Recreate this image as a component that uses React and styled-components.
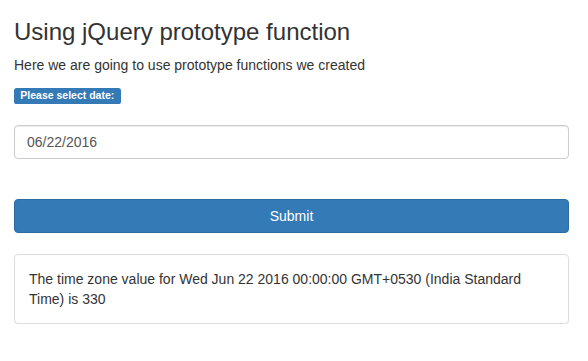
import React from 'react';
import styled, {createGlobalStyle} from 'styled-components';

const GlobalStyle = createGlobalStyle`
  html, body {
    margin: 0;
    padding: 0;
    background: #fff;
  }
  body {
    font-family: "Liberation Sans", Arial, Helvetica, sans-serif;
    font-size: 14px;
    line-height: 1.42857143;
    color: #333;
  }
  * {
    box-sizing: border-box;
  }
`

const Container = styled.div`
  padding: 0 19px 0 14px;
`

const Title = styled.h3`
  margin: 19px 0 10px;
  font-size: 24px;
  font-weight: 500;
  line-height: 1.1;
  color: #333;
`

const Lead = styled.p`
  margin: 0 0 10px;
`

const LabelRow = styled.div`
  margin-bottom: 20px;
  line-height: 18px;
  height: 20px;
`

const Badge = styled.span`
  display: inline-block;
  padding: .2em .6em .3em;
  font-size: 10.5px;
  font-weight: 700;
  line-height: 1;
  color: #fff;
  background-color: #337ab7;
  border-radius: .25em;
  white-space: nowrap;
`

const DateInput = styled.input`
  display: block;
  width: 100%;
  height: 34px;
  padding: 6px 12px;
  font-family: inherit;
  font-size: 14px;
  line-height: 1.42857143;
  color: #555;
  background: #fff;
  border: 1px solid #ccc;
  border-radius: 4px;
  box-shadow: inset 0 1px 1px rgba(0, 0, 0, .075);
  outline: none;
`

const SubmitButton = styled.button`
  display: block;
  width: 100%;
  height: 34px;
  margin-top: 40px;
  padding: 6px 12px;
  font-family: inherit;
  font-size: 14px;
  line-height: 1.42857143;
  color: #fff;
  background-color: #337ab7;
  border: 1px solid #2e6da4;
  border-radius: 4px;
  cursor: pointer;
`

const ResultPanel = styled.div`
  margin-top: 21px;
  padding: 14px;
  background: #fff;
  border: 1px solid #ddd;
  border-radius: 4px;
  box-shadow: 0 1px 1px rgba(0, 0, 0, .05);
`

export default function App() {
    return (
        <>
            <GlobalStyle/>
            <Container>
                <Title>Using jQuery prototype function</Title>
                <Lead>Here we are going to use prototype functions we created</Lead>
                <LabelRow>
                    <Badge>Please select date:</Badge>
                </LabelRow>
                <DateInput type="text" defaultValue="06/22/2016" readOnly/>
                <SubmitButton type="button">Submit</SubmitButton>
                <ResultPanel>
                    The time zone value for Wed Jun 22 2016 00:00:00 GMT+0530 (India Standard Time) is 330
                </ResultPanel>
            </Container>
        </>
    );
}
